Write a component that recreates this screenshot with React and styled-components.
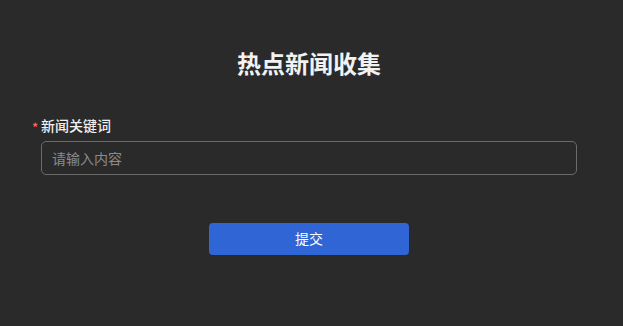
import React from 'react'
import styled, { createGlobalStyle } from 'styled-components'

const GlobalStyle = createGlobalStyle`
  html, body {
    margin: 0;
    padding: 0;
    background: #2a2a2a;
    height: 100%;
  }
  body {
    font-family: "Noto Sans CJK SC", "Microsoft YaHei", sans-serif;
  }
  #root {
    height: 100%;
  }
`

const Page = styled.div`
  width: 618px;
  height: 326px;
  background: #2a2a2a;
  padding: 46px 41px 0;
  box-sizing: border-box;
  display: flex;
  flex-direction: column;
`

const Title = styled.h1`
  margin: 0;
  text-align: center;
  font-size: 24px;
  line-height: 34px;
  font-weight: 700;
  color: #f2f2f2;
`

const Field = styled.div`
  margin-top: 36px;
  display: flex;
  flex-direction: column;
  gap: 7px;
`

const Label = styled.label`
  position: relative;
  font-size: 14px;
  line-height: 18px;
  font-weight: 500;
  color: #f0f0f0;

  &::before {
    content: '*';
    position: absolute;
    left: -9px;
    top: 3px;
    color: #f56c6c;
    font-size: 13px;
  }
`

const Input = styled.input`
  height: 34px;
  box-sizing: border-box;
  border: 1px solid #6b6b6b;
  border-radius: 5px;
  background: transparent;
  padding: 0 10px;
  font-family: inherit;
  font-size: 14px;
  color: #e0e0e0;
  outline: none;

  &::placeholder {
    color: #8a8a8a;
  }
`

const Actions = styled.div`
  margin-top: 48px;
  display: flex;
  justify-content: center;
`

const Button = styled.button`
  width: 200px;
  height: 32px;
  border: none;
  border-radius: 4px;
  background: #2f65d4;
  color: #fff;
  font-family: inherit;
  font-size: 14px;
  padding: 0 0 3px;
  cursor: pointer;
`

export default function App() {
  return (
    <>
      <GlobalStyle />
      <Page>
        <Title>热点新闻收集</Title>
        <Field>
          <Label>新闻关键词</Label>
          <Input placeholder="请输入内容" />
        </Field>
        <Actions>
          <Button>提交</Button>
        </Actions>
      </Page>
    </>
  )
}
